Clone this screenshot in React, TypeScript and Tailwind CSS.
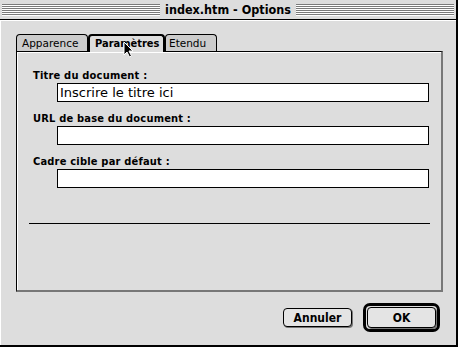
import React from "react";

const bold = { fontFamily: '"DejaVu Sans Condensed", "DejaVu Sans", sans-serif' };
const reg = { fontFamily: '"DejaVu Sans", sans-serif' };

function Stripes({ className }: { className: string }) {
  return (
    <div className={"flex flex-col " + className}>
      {[0, 1, 2, 3, 4, 5].map((i) => (
        <div key={i} className="h-[2px] border-t border-[#7a7a7a] border-b border-b-white" />
      ))}
    </div>
  );
}

function Field({ value }: { value?: string }) {
  return (
    <div
      className="ml-[39px] mr-[12px] h-[19px] border border-black bg-white pl-[2px] text-[13px] leading-[17px] text-black"
      style={reg}
    >
      {value}
    </div>
  );
}

function Label({ text, mt }: { text: string; mt: string }) {
  return (
    <div className={"pl-[15px] h-[14px] text-[11px] font-bold leading-[14px] text-black tracking-[0.2px] " + mt} style={bold}>
      {text}
    </div>
  );
}

export default function App() {
  return (
    <div className="w-[461px] h-[348px] bg-white overflow-hidden">
      <div className="relative w-[458px] h-[347px] bg-[#dddddd] border-r-2 border-b-2 border-black flex flex-col">
        {/* Title bar */}
        <div className="h-[20px] border-b border-black flex items-center px-[2px] bg-[#dddddd]">
          <Stripes className="flex-1 mt-[1px]" />
          <div className="px-[5px] text-[12.5px] font-bold leading-[16px] text-black" style={bold}>
            index.htm - Options
          </div>
          <Stripes className="flex-1 mt-[1px]" />
        </div>
        {/* Body */}
        <div className="flex-1 border-l border-t border-white flex flex-col">
          {/* Tabs */}
          <div className="ml-[15px] mt-[12px] flex items-end h-[18px]">
            <div
              className="w-[72px] h-[17px] border border-black border-b-0 rounded-t-[4px] bg-[#cccccc] pl-[5px] text-[10.5px] leading-[16px] text-black"
              style={reg}
            >
              Apparence
            </div>
            <div
              className="relative z-10 w-[77px] h-[18px] -mb-[1px] border-2 border-black border-b-0 rounded-t-[4px] bg-[#dddddd] pl-[5px] text-[11px] font-bold leading-[15px] text-black"
              style={bold}
            >
              Paramètres
            </div>
            <div
              className="w-[52px] h-[17px] border border-black border-b-0 rounded-t-[4px] bg-[#cccccc] pl-[3px] text-[10.5px] leading-[16px] text-black"
              style={reg}
            >
              Etendu
            </div>
          </div>
          {/* Panel */}
          <div className="ml-[15px] w-[427px] h-[241px] border-l border-t border-black border-r-2 border-b-2 border-r-[#777777] border-b-[#777777]">
            <div className="h-full border-l border-t border-white flex flex-col">
              <Label text="Titre du document :" mt="mt-[16px]" />
              <Field value="Inscrire le titre ici" />
              <Label text="URL de base du document :" mt="mt-[10px]" />
              <Field />
              <Label text="Cadre cible par défaut :" mt="mt-[10px]" />
              <Field />
              <div className="ml-[11px] mr-[11px] mt-[35px] h-px bg-black" />
            </div>
          </div>
          {/* Buttons */}
          <div className="flex items-center justify-end mt-[11px] pr-[16px] gap-[11px]">
            <div
              className="w-[69px] h-[19px] border border-black rounded-[4px] bg-[#e4e4e4] shadow-[1px_1px_0_#777] flex items-center justify-center text-[12px] font-bold text-black"
              style={bold}
            >
              Annuler
            </div>
            <div className="w-[77px] h-[29px] border-[3px] border-black rounded-[7px] p-px">
              <div
                className="w-full h-full border border-black rounded-[4px] bg-[#e4e4e4] shadow-[1px_1px_0_#777] flex items-center justify-center text-[12px] font-bold text-black"
                style={bold}
              >
                OK
              </div>
            </div>
          </div>
        </div>
        {/* Cursor */}
        <svg className="absolute z-20 left-[123px] top-[41px]" width="12" height="17" viewBox="0 0 12 17">
          <path d="M1 1 L1 14 L4 11 L6.5 16 L8.5 15 L6 10 L10 10 Z" fill="black" stroke="white" strokeWidth="1" />
        </svg>
      </div>
    </div>
  );
}
